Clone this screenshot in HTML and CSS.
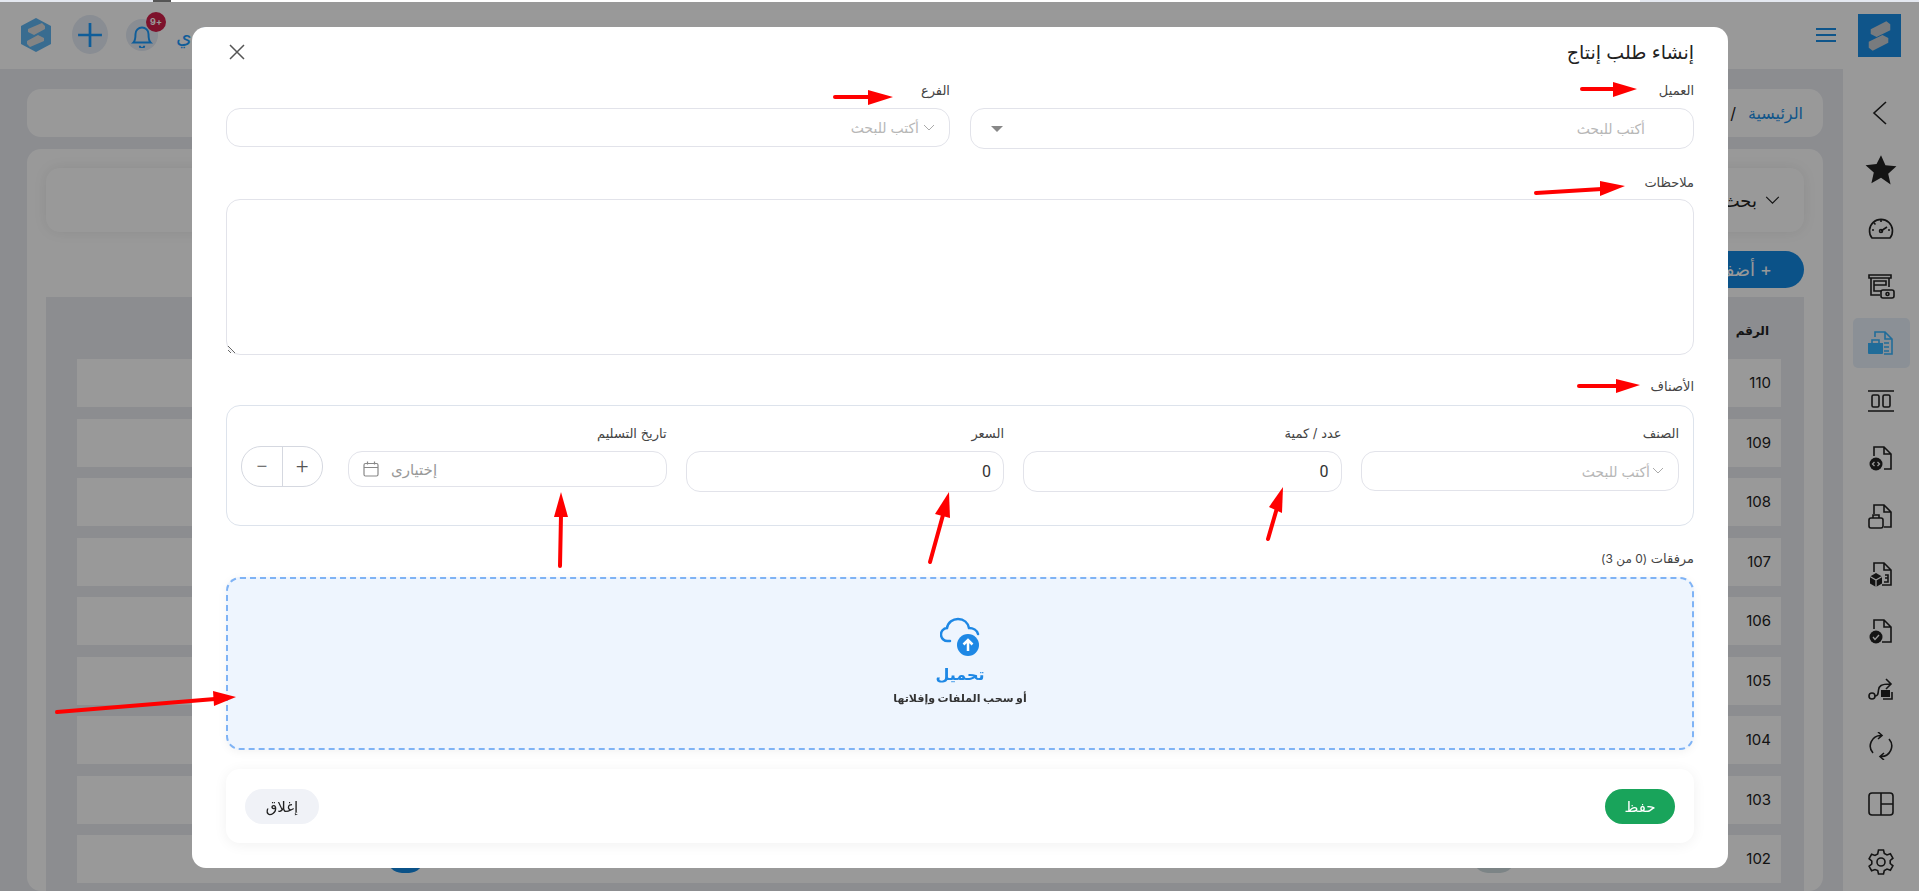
FILE: index.html
```html
<!DOCTYPE html>
<html lang="ar" dir="rtl">

<head>
    <meta charset="UTF-8">
    <meta name="viewport" content="width=device-width, initial-scale=1.0">
    <title>إنشاء طلب إنتاج</title>
    <link rel="stylesheet" href="styles.css">
</head>

<body>
    <aside class="sidebar">
        <div class="side-logo">
            <svg viewBox="0 0 44 44" width="44" height="44">
                <path d="M13 20V15l16-8 4 3v6l-14 7zM31 24v5l-16 8-4-3v-6l14-7z" fill="#c9ced3" />
            </svg>
        </div>
        <nav class="side-nav">
            <a class="nav-item">
                <svg class="nav-icon" viewBox="0 0 28 28"><path d="M19 3 7 14l12 11" /></svg>
            </a>
            <a class="nav-item">
                <svg class="nav-icon solid" viewBox="0 0 28 28"><path d="M14 1l3.9 8.8 9.6 1-7.2 6.4 2.1 9.4L14 20.700 5.600 25.600l2.100-9.400L.5 9.800l9.600-1z" /></svg>
            </a>
            <a class="nav-item">
                <svg class="nav-icon" viewBox="0 0 28 28"><path d="M5 24a11.500 11.500 0 1 1 18 0zM14 17l6-4M14 6v2M7 9l1.500 1.500M5 16h2M21 16h2" /><circle cx="14" cy="17" r="1.500" /></svg>
            </a>
            <a class="nav-item">
                <svg class="nav-icon" viewBox="0 0 28 28"><path d="M2 3h22v3H2zM4 6v17h9M22 6v9M7 9h12v4H7zM7 13v6h7" /><rect x="14" y="18" width="13" height="8" rx="2" /><circle cx="20.500" cy="22" r="1.500" /></svg>
            </a>
            <a class="nav-item active">
                <svg class="nav-icon" viewBox="0 0 28 28"><path d="M8 8V3h10l7 7v15H17M18 3v7h7M17 14h5M17 18h5M17 22h5" /><path class="fill" d="M1 14h15v10a1 1 0 0 1-1 1H2a1 1 0 0 1-1-1z" /><path d="M5 14v-3h7v3" /></svg>
            </a>
            <a class="nav-item">
                <svg class="nav-icon" viewBox="0 0 28 28"><path d="M1 4h26M1 24h26" /><rect x="5" y="8" width="7" height="12" rx="1.500" /><rect x="16" y="8" width="7" height="12" rx="1.500" /></svg>
            </a>
            <a class="nav-item">
                <svg class="nav-icon" viewBox="0 0 28 28"><path d="M7 12V3h10l7 7v15h-7M17 3v7h7" /><circle class="fill" cx="9" cy="20" r="6.500" /><path class="cut" d="M7.500 18l-2 2 2 2M10.500 18l2 2-2 2" /></svg>
            </a>
            <a class="nav-item">
                <svg class="nav-icon" viewBox="0 0 28 28"><path d="M7 12V3h10l7 7v15h-7M17 3v7h7" /><rect x="2" y="16" width="14" height="10" rx="2" /><path d="M6 16v-3h6v3" /></svg>
            </a>
            <a class="nav-item">
                <svg class="nav-icon" viewBox="0 0 28 28"><path d="M7 12V3h10l7 7v15h-9M17 3v7h7M18 15h3v7h-4M18 18h3" /><path class="fill" d="M9 13l6 3.500v7L9 27l-6-3.500v-7z" /><path class="cut" d="M3 16.500l6 3.500 6-3.500M9 20v7" /></svg>
            </a>
            <a class="nav-item">
                <svg class="nav-icon" viewBox="0 0 28 28"><path d="M7 12V3h10l7 7v15h-9M17 3v7h7" /><circle class="fill" cx="9" cy="20" r="6.500" /><path class="cut" d="M6 20l2 2.500 4-4.500" /></svg>
            </a>
            <a class="nav-item">
                <svg class="nav-icon" viewBox="0 0 28 28"><circle cx="5" cy="21" r="3" /><path d="M8 21c3 0 3-2 3.500-6S14 9 23 9M19 4l5 5-5 5" /><rect class="fill" x="14" y="15" width="9" height="7" /><path d="M25 17v7H16" /></svg>
            </a>
            <a class="nav-item">
                <svg class="nav-icon" viewBox="0 0 28 28"><path d="M6 21a10.500 10.500 0 0 1 8-17.500M22 7a10.500 10.500 0 0 1-8 17.500M11 0l4 3.500-4 3.500M17 21l-4 3.500 4 3.500" /></svg>
            </a>
            <a class="nav-item">
                <svg class="nav-icon" viewBox="0 0 28 28"><rect x="2" y="3" width="24" height="22" rx="3" /><path d="M14 3v22M14 14h12" /></svg>
            </a>
            <a class="nav-item">
                <svg class="nav-icon" viewBox="0 0 28 28"><circle cx="14" cy="14" r="4" /><path d="M11.500 2h5l.8 3.500 2.700 1.500 3.400-1.200 2.500 4.400-2.700 2.300v3l2.700 2.300-2.500 4.400-3.400-1.200-2.700 1.500-.8 3.500h-5l-.8-3.500L8 21.500l-3.400 1.200-2.500-4.400 2.700-2.300v-3L2.100 10.700l2.500-4.400L8 7.500l2.700-1.500z" /></svg>
            </a>
        </nav>
    </aside>

    <div class="page">
        <header class="topbar">
            <svg class="burger" viewBox="0 0 20 16" width="20" height="16"><path d="M0 2h20M0 8h20M0 14h20" /></svg>
            <div class="top-tools">
                <svg class="hex-logo" viewBox="0 0 36 36" width="36" height="36">
                    <path d="M18 1l15 8v18l-15 8-15-8V9z" fill="#5fb4f0" />
                    <path d="M10 15v-3l14-6 3 3v3l-11 6zM26 21v3l-14 6-3-3v-3l11-6z" fill="#ddd" />
                </svg>
                <div class="round-btn">
                    <svg viewBox="0 0 24 24" width="26" height="26"><path d="M12 1v22M1 12h22" /></svg>
                </div>
                <div class="bell-btn">
                    <svg viewBox="0 0 24 24" width="26" height="26"><path d="M4 19c2-2 2-4 2-8a6 6 0 0 1 12 0c0 4 0 6 2 8zM10 22a2 2 0 0 0 4 0" /></svg>
                    <span class="badge">+9</span>
                </div>
                <span class="top-crumb">/ ي</span>
            </div>
        </header>

        <main class="content">
            <div class="card crumbs">
                <a>الرئيسية</a>
                <span>/</span>
            </div>
            <section class="card list-card">
                <div class="filter-card">
                    <svg class="down" viewBox="0 0 16 10" width="15" height="9"><path d="M1 1l7 7 7-7" /></svg>
                    <span>بحث</span>
                </div>
                <div class="add-row"><button class="add-btn">+ أضف</button></div>
                <div class="table-wrap">
                    <div class="table-head">الرقم</div>
                    <div class="table-row">110</div>
                    <div class="table-row">109</div>
                    <div class="table-row">108</div>
                    <div class="table-row">107</div>
                    <div class="table-row">106</div>
                    <div class="table-row">105</div>
                    <div class="table-row">104</div>
                    <div class="table-row">103</div>
                    <div class="table-row last-row">102<i class="pill grey"></i><i class="pill blue"></i></div>
                </div>
            </section>
        </main>
    </div>

    <div class="overlay"></div>

    <div class="modal">
        <div class="modal-head">
            <h2>إنشاء طلب إنتاج</h2>
            <svg class="close-x" viewBox="0 0 16 16" width="16" height="16"><path d="M1 1l14 14M15 1L1 15" /></svg>
        </div>

        <div class="two-cols">
            <div class="field">
                <label>العميل</label>
                <div class="box customer">
                    <span class="ph">أكتب للبحث</span>
                    <i class="caret"></i>
                </div>
            </div>
            <div class="field">
                <label>الفرع</label>
                <div class="box branch">
                    <svg class="chev" viewBox="0 0 12 8" width="12" height="8"><path d="M1 1l5 5 5-5" /></svg>
                    <span class="ph">أكتب للبحث</span>
                </div>
            </div>
        </div>

        <label class="notes-label">ملاحظات</label>
        <textarea class="notes"></textarea>

        <label class="items-label">الأصناف</label>
        <div class="items-box">
            <div class="item-col">
                <label>الصنف</label>
                <div class="box item-select">
                    <svg class="chev" viewBox="0 0 12 8" width="12" height="8"><path d="M1 1l5 5 5-5" /></svg>
                    <span class="ph">أكتب للبحث</span>
                </div>
            </div>
            <div class="item-col">
                <label>عدد / كمية</label>
                <input class="box num" type="text" value="0">
            </div>
            <div class="item-col">
                <label>السعر</label>
                <input class="box num" type="text" value="0">
            </div>
            <div class="item-col">
                <label>تاريخ التسليم</label>
                <div class="box date-box">
                    <span class="date-ph">إختيارى</span>
                    <svg class="cal" viewBox="0 0 16 16" width="16" height="16"><rect x="1" y="2.500" width="14" height="12.500" rx="1.500" /><path d="M1 6.500h14M4.500 .5v3M11.500 .5v3" /></svg>
                </div>
            </div>
            <div class="stepper">
                <button>+</button>
                <button>−</button>
            </div>
        </div>

        <label class="attach-label">مرفقات <small>(0 من 3)</small></label>
        <div class="dropzone">
            <svg class="cloud" viewBox="0 0 40 40" width="40" height="40">
                <path class="cloud-line" d="M10 24H8a6.500 6.500 0 0 1-1-13C8 5 13 2 18 2c6 0 10 4 11 9 4 0 8 2 9 6" />
                <circle cx="28" cy="28" r="11" fill="#1e88e5" />
                <path class="cloud-arrow" d="M28 34V23M23.500 27.500 28 23l4.500 4.500" />
            </svg>
            <div class="drop-title">تحميل</div>
            <div class="drop-sub">أو سحب الملفات وإفلاتها</div>
        </div>

        <div class="modal-foot">
            <button class="btn-save">حفظ</button>
            <button class="btn-close">إغلاق</button>
        </div>
    </div>

    <div class="top-strip"></div>

    <svg class="arrows" viewBox="0 0 1919 891" width="1919" height="891">
        <path d="M1582 89H1615" />
        <polygon points="1613,82 1637,89 1613,97" />
        <path d="M1536 193 1602 189" />
        <polygon points="1600,181 1625,186 1600,196" />
        <path d="M1579 386H1618" />
        <polygon points="1616,379 1640,385 1616,393" />
        <path d="M835 97H870" />
        <polygon points="868,90 893,97 868,105" />
        <path d="M560 566 561 515" />
        <polygon points="554,517 561,492 568,517" />
        <path d="M930 562 943 515" />
        <polygon points="935,514 949,492 950,518" />
        <path d="M1268 539 1277 508" />
        <polygon points="1269,507 1283,487 1282,513" />
        <path d="M57 712 215 699" />
        <polygon points="213,691 236,697 214,706" />
    </svg>
</body>

</html>
```
FILE: styles.css
```css
* {
    box-sizing: border-box;
}

html,
body {
    margin: 0;
    height: 100%;
}

body {
    display: flex;
    height: 100vh;
    overflow: hidden;
    font-family: 'Inter', 'DejaVu Sans', sans-serif;
    background-color: #e9ebf1;
    color: #222;
}

/* page behind the dialog */
.sidebar {
    width: 76px;
    flex-shrink: 0;
    background-color: #fff;
}

.side-logo {
    width: 43px;
    height: 43px;
    margin: 14px 18px 0 15px;
    background-color: #1a8ee6;
    display: flex;
    align-items: center;
    justify-content: center;
}

.side-nav {
    display: flex;
    flex-direction: column;
    align-items: center;
    padding-top: 27px;
}

.nav-item {
    width: 57px;
    height: 57.6px;
    display: flex;
    align-items: center;
    justify-content: center;
    border-radius: 5px;
}

.nav-item.active {
    background-color: #e8f1fb;
    height: 50px;
    margin: 3.8px 0;
}

.nav-icon {
    width: 28px;
    height: 28px;
    fill: none;
    stroke: #222;
    stroke-width: 1.6;
}

.nav-icon.solid {
    fill: #222;
    stroke: none;
    width: 32px;
    height: 32px;
}

.nav-icon .fill {
    fill: #222;
    stroke: none;
}

.nav-icon .cut {
    stroke: #fff;
    stroke-width: 1.3;
}

.nav-item.active .nav-icon {
    stroke: #36b4ff;
}

.nav-item.active .nav-icon .fill {
    fill: #36b4ff;
}

.page {
    flex: 1;
    display: flex;
    flex-direction: column;
    min-width: 0;
}

.topbar {
    height: 69px;
    flex-shrink: 0;
    background-color: #fff;
    display: flex;
    align-items: center;
    justify-content: space-between;
    padding: 0 7px 0 18px;
}

.burger path {
    fill: none;
    stroke: #1a8ee6;
    stroke-width: 2;
}

.top-tools {
    display: flex;
    flex-direction: row-reverse;
    align-items: center;
    gap: 18px;
}

.round-btn {
    width: 36px;
    height: 39px;
    border-radius: 50%;
    background-color: #e4ebf5;
    display: flex;
    align-items: center;
    justify-content: center;
}

.round-btn path {
    stroke: #1a9bff;
    stroke-width: 2.500;
    fill: none;
}

.bell-btn {
    position: relative;
    width: 32px;
    height: 32px;
    border-radius: 50%;
    background-color: #e4ebf5;
    display: flex;
    align-items: center;
    justify-content: center;
}

.bell-btn path {
    stroke: #1a9bff;
    stroke-width: 1.800;
    fill: none;
}

.badge {
    position: absolute;
    top: -7px;
    right: -8px;
    width: 20px;
    height: 20px;
    border-radius: 50%;
    background-color: #d01e4a;
    color: #fff;
    font-size: 9px;
    font-weight: 700;
    display: flex;
    align-items: center;
    justify-content: center;
}

.top-crumb {
    color: #1a9bff;
    font-size: 20px;
    margin-top: 2px;
}

.content {
    flex: 1;
    min-height: 0;
    padding: 20px 20px 0 27px;
    display: flex;
    flex-direction: column;
    gap: 12px;
}

.card {
    background-color: #fff;
    border-radius: 14px;
}

.crumbs {
    height: 48px;
    flex-shrink: 0;
    display: flex;
    align-items: center;
    gap: 12px;
    padding: 0 20px;
    font-size: 16px;
}

.crumbs a {
    color: #1a8ee6;
}

.list-card {
    flex: 1;
    min-height: 0;
    padding: 19px 19px 0;
}

.filter-card {
    height: 64px;
    border-radius: 14px;
    background-color: #fff;
    box-shadow: 0 0 14px rgba(0, 0, 0, 0.08);
    display: flex;
    align-items: center;
    gap: 8px;
    padding: 0 24px;
    font-size: 18px;
}

.down path {
    fill: none;
    stroke: #222;
    stroke-width: 1.300;
}

.add-row {
    padding: 19px 0 9px;
    height: 65px;
}

.add-btn {
    height: 37px;
    width: 120px;
    border: none;
    border-radius: 19px;
    background-color: #1389e3;
    color: #fff;
    font-family: inherit;
    font-size: 18px;
}

.table-wrap {
    background-color: #e9ebf1;
    padding-left: 31px;
    padding-right: 23px;
    height: 600px;
}

.table-head {
    height: 62px;
    line-height: 68px;
    font-size: 12px;
    font-weight: 700;
    padding-right: 12px;
}

.table-row {
    position: relative;
    height: 48px;
    margin-bottom: 11.500px;
    background-color: #fff;
    line-height: 48px;
    font-size: 15px;
    padding-right: 10px;
}

.pill {
    position: absolute;
    top: 8px;
    height: 30px;
    border-radius: 15px;
}

.pill.grey {
    right: 266px;
    width: 42px;
    background-color: #cfdcdf;
}

.pill.blue {
    left: 310px;
    width: 37px;
    background-color: #1389e3;
}

.overlay {
    position: fixed;
    inset: 0;
    background-color: rgba(0, 0, 0, 0.4);
}

.top-strip {
    position: fixed;
    top: 0;
    left: 0;
    right: 0;
    height: 2px;
    background: linear-gradient(to right, #e4e8f0 153px, #555 153px, #555 171px, #fff 171px, #fff 1640px, #e4e8f0 1640px);
}

/* dialog */
.modal {
    position: fixed;
    top: 27px;
    left: 192px;
    width: 1536px;
    height: 841px;
    background-color: #fff;
    border-radius: 14px;
    padding: 0 34px;
    display: flex;
    flex-direction: column;
    font-size: 13px;
    color: #444;
}

.modal label {
    display: block;
    line-height: 24px;
}

.modal-head {
    height: 50px;
    flex-shrink: 0;
    display: flex;
    align-items: center;
    justify-content: space-between;
    padding-left: 3px;
}

.modal-head h2 {
    margin: 0;
    font-size: 19px;
    font-weight: 400;
    color: #222;
}

.close-x path {
    stroke: #555;
    stroke-width: 1.500;
}

.two-cols {
    display: flex;
    gap: 20px;
    align-items: flex-start;
}

.field {
    flex: 1;
}

.field label {
    padding-top: 1px;
    margin-bottom: 6px;
}

.box {
    display: flex;
    align-items: center;
    width: 100%;
    background-color: #fff;
    border: 1px solid #e2e3ea;
    border-radius: 14px;
    font-family: inherit;
}

.ph {
    color: #b7b7b7;
    font-size: 14px;
}

.customer {
    height: 41px;
    padding: 0 48px 0 20px;
    justify-content: space-between;
}

.caret {
    border-top: 6px solid #888;
    border-left: 6px solid transparent;
    border-right: 6px solid transparent;
}

.branch {
    height: 39px;
    padding: 0 14px;
    gap: 4px;
}

.chev path {
    fill: none;
    stroke: #aaa;
    stroke-width: 1;
}

.notes-label {
    margin-top: 21px;
    margin-bottom: 5px;
}

.notes {
    width: 100%;
    height: 156px;
    flex-shrink: 0;
    border: 1px solid #e2e3ea;
    border-radius: 14px;
    font-family: inherit;
}

.items-label {
    margin-top: 19px;
    margin-bottom: 7px;
}

.items-box {
    height: 121px;
    flex-shrink: 0;
    border: 1px solid #dde3ec;
    border-radius: 14px;
    padding: 15px 14px 0;
    display: flex;
    gap: 19px;
    align-items: flex-start;
}

.item-col {
    flex: 1;
}

.item-col label {
    margin-bottom: 6px;
}

.item-select {
    height: 40px;
    padding: 0 14px;
    gap: 2px;
}

.num {
    height: 41px;
    padding: 0 12px;
    font-size: 16px;
    font-family: 'Roboto', sans-serif;
    color: #333;
    text-align: right;
}

.date-box {
    height: 36px;
    padding: 0 14px;
    justify-content: flex-end;
    gap: 12px;
}

.date-ph {
    color: #999;
    font-size: 15px;
}

.cal rect,
.cal path {
    fill: none;
    stroke: #888;
    stroke-width: 1.200;
}

.stepper {
    width: 82px;
    height: 41px;
    margin-top: 25px;
    margin-right: 6px;
    flex-shrink: 0;
    display: flex;
    border: 1px solid #d5d8e0;
    border-radius: 20px;
    overflow: hidden;
}

.stepper button {
    flex: 1;
    border: none;
    background: none;
    font-size: 22px;
    font-weight: 300;
    color: #555;
    font-family: 'Roboto', sans-serif;
    padding: 0;
}

.stepper button + button {
    border-right: 1px solid #d5d8e0;
}

.attach-label {
    margin-top: 20px;
    margin-bottom: 6px;
}

.attach-label small {
    font-size: 12px;
}

.dropzone {
    height: 173px;
    flex-shrink: 0;
    background-color: #eef5fe;
    border: 2px dashed #7fb3f5;
    border-radius: 14px;
    box-shadow: 0 2px 10px rgba(0, 0, 0, 0.05);
    display: flex;
    flex-direction: column;
    align-items: center;
    padding-top: 38px;
}

.cloud-line {
    fill: none;
    stroke: #1e88e5;
    stroke-width: 2.500;
    stroke-linecap: round;
}

.cloud-arrow {
    fill: none;
    stroke: #fff;
    stroke-width: 2.500;
}

.drop-title {
    margin-top: 4px;
    color: #1e88e5;
    font-size: 16px;
    font-weight: 700;
    line-height: 26px;
}

.drop-sub {
    color: #333;
    font-size: 11px;
    font-weight: 700;
    line-height: 22px;
}

.modal-foot {
    height: 74px;
    flex-shrink: 0;
    margin-top: 19px;
    border-radius: 14px;
    box-shadow: 0 2px 14px rgba(0, 0, 0, 0.06);
    display: flex;
    align-items: center;
    justify-content: space-between;
    padding: 0 19px;
}

.modal-foot button {
    height: 35px;
    border: none;
    border-radius: 18px;
    font-family: inherit;
    font-size: 15px;
}

.btn-save {
    width: 70px;
    background-color: #19a45b;
    color: #fff;
}

.btn-close {
    width: 74px;
    background-color: #f0f2f7;
    color: #222;
}

/* red marks drawn on the screenshot */
.arrows {
    position: fixed;
    top: 0;
    left: 0;
}

.arrows path {
    fill: none;
    stroke: #f00;
    stroke-width: 4;
    stroke-linecap: round;
}

.arrows polygon {
    fill: #f00;
}
```
